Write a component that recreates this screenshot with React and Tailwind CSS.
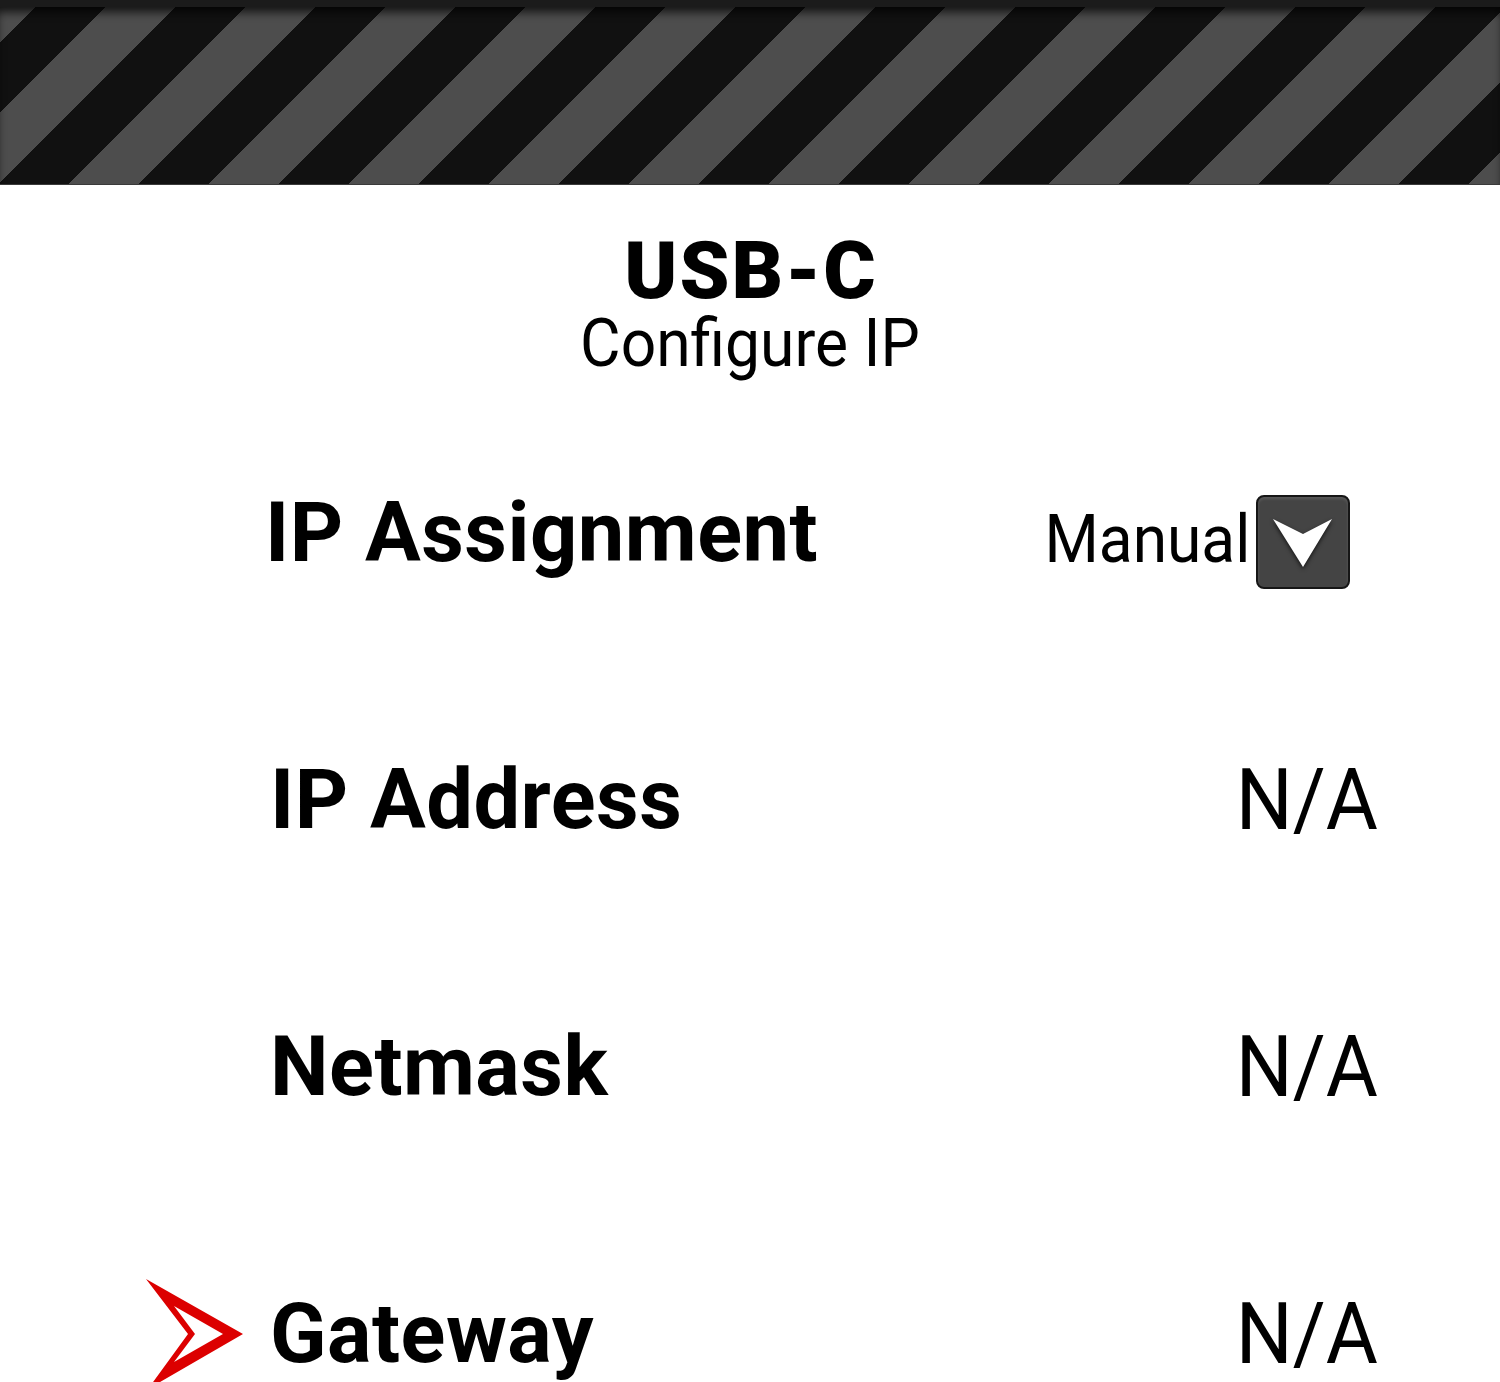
import React from "react";

function RedArrow() {
  return (
    <svg width="100" height="112" viewBox="0 0 100 112" className="block">
      <path
        fillRule="evenodd"
        fill="#dc0000"
        d="M0 1 L97 56 L2 111 L42 56 Z M28 28 L49 56 L28 84 L77 56 Z"
      />
    </svg>
  );
}

function Dropdown() {
  return (
    <div className="w-[94px] h-[94px] rounded-[8px] border-2 border-[#161616] bg-[#444444] shadow-[inset_0_2px_3px_rgba(255,255,255,0.12)] flex items-center justify-center">
      <svg width="90" height="90" viewBox="0 0 90 90" className="block drop-shadow-[0_2px_2px_rgba(0,0,0,0.7)]">
        <path d="M15 22 L45 37 L74 22 L45 70 Z" fill="#ffffff" />
      </svg>
    </div>
  );
}

function NA() {
  return <span className="text-[86px] leading-none inline-block origin-right scale-x-[0.93]">N/A</span>;
}

function Row({ label, value, arrow, first }) {
  return (
    <div className="flex items-center h-[267px] pl-[146px] pr-[122px]">
      <div className={first ? "w-[119px] flex items-center" : "w-[124px] flex items-center"}>
        {arrow ? <RedArrow /> : null}
      </div>
      <div className="text-[83px] leading-none font-bold tracking-[0.5px] text-black">{label}</div>
      <div className="flex-1" />
      {value}
    </div>
  );
}

export default function App() {
  return (
    <div className="w-[1500px] h-[1382px] overflow-hidden bg-white font-['Roboto',sans-serif] text-black">
      <div className="h-[185px] border-t-[7px] border-t-[#1b1b1b] border-b border-b-[#3a3a3a] bg-origin-border bg-[image:repeating-linear-gradient(135deg,#4d4d4d_0px,#4d4d4d_30.4px,#111111_30.4px,#111111_79.9px,#4d4d4d_79.9px,#4d4d4d_98.995px)] shadow-[inset_0_8px_10px_-3px_rgba(0,0,0,0.75)]" />
      <div className="flex flex-col items-center pt-[46px]">
        <div className="text-[80px] leading-none font-black tracking-[2px] pl-[2px]">USB-C</div>
        <div className="text-[66px] leading-none scale-x-[0.944]">Configure IP</div>
      </div>
      <div className="pt-[22px]">
        <Row
          first
          label="IP Assignment"
          value={
            <div className="flex items-center gap-[6px] mr-[28px] mt-[18px]">
              <span className="text-[66px] leading-none inline-block origin-right scale-x-[0.943] -mt-[4px]">Manual</span>
              <Dropdown />
            </div>
          }
        />
        <Row label="IP Address" value={<NA />} />
        <Row label="Netmask" value={<NA />} />
        <Row arrow label="Gateway" value={<NA />} />
      </div>
    </div>
  );
}
